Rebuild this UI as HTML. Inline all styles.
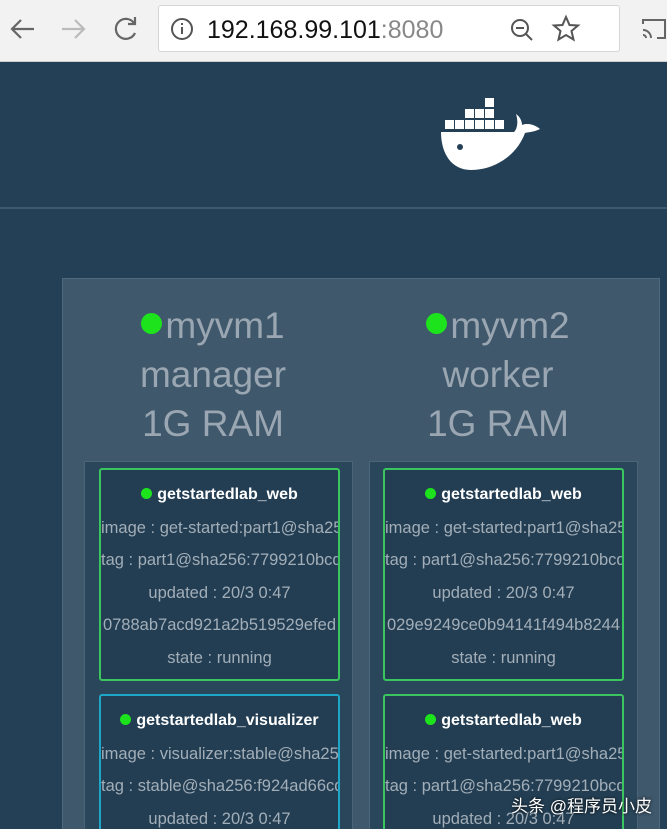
<!DOCTYPE html>
<html><head><meta charset="utf-8"><style>
*{margin:0;padding:0;box-sizing:border-box}
html,body{width:667px;height:829px;overflow:hidden}
body{background:#244057;font-family:"Liberation Sans","Noto Sans CJK SC",sans-serif;position:relative}
.bar{position:absolute;left:0;top:0;width:667px;height:62px;background:#f2f2f2;border-bottom:1px solid #ccc}
.url{position:absolute;left:158px;top:5px;width:462px;height:47px;background:#fff;border:1px solid #d6d6d6;border-radius:3px}
.url span{position:absolute;left:48px;top:10px;font-size:25px;color:#111}
.hr{position:absolute;left:0;top:207px;width:667px;height:2px;background:#3b5a70}
.panel{position:absolute;left:62px;top:278px;width:598px;height:560px;background:#3f586c;border:1px solid #4f687c}
.node{position:absolute;top:301px;width:268px;text-align:center;color:#9aa6b1;font-size:37px;line-height:49px}
.dot{display:inline-block;width:21px;height:21px;border-radius:50%;background:#1de31d;margin-right:3px;vertical-align:4px}
.col{position:absolute;top:461px;width:269px;height:380px;background:#2a465b;border:1px solid #4c6477}
.card{position:absolute;width:241px;background:#233e53;border:2px solid #3bc55f;border-radius:3px;overflow:hidden;text-align:center;white-space:nowrap;padding-top:9px}
.card.b{border-color:#1ea6c9}
.card div{height:32.6px;line-height:32px;font-size:16.5px;color:#a2aeb8}
.card .t{color:#fff;font-weight:bold;font-size:16px}
.card .t i{display:inline-block;width:11px;height:11px;border-radius:50%;background:#1de31d;margin-right:5px}
.wm{position:absolute;left:511px;top:792px;color:#fff;font-size:17px;text-shadow:0 0 3px #000}
</style></head><body>
<div class="bar">
<svg width="150" height="60" style="position:absolute;left:0;top:0" fill="none" stroke-width="2.2">
<path d="M34 29H12M21 20l-9 9 9 9" stroke="#666"/>
<path d="M62 29h22M75 20l9 9-9 9" stroke="#bbb"/>
<path d="M134 23a10 10 0 1 0 1 10M135 17v7h-7" stroke="#666"/>
</svg>
<div class="url">
<svg width="30" height="30" style="position:absolute;left:9px;top:9px"><circle cx="14" cy="14" r="10" stroke="#555" stroke-width="2" fill="none"/><path d="M14 12v7M14 8v2" stroke="#555" stroke-width="2"/></svg>
<span>192.168.99.101<span style="position:static;color:#888">:8080</span></span>
<svg width="80" height="40" style="position:absolute;left:345px;top:5px" fill="none" stroke="#555" stroke-width="2"><circle cx="16" cy="17" r="8"/><path d="M22 23l6 6M12 17h8"/><path d="M62 6l3.5 8 8.5.5-6.5 5.5 2 8.5-7.5-4.5-7.5 4.5 2-8.5-6.5-5.5 8.5-.5z"/></svg>
</div>
<svg width="30" height="30" style="position:absolute;left:640px;top:16px" fill="none" stroke="#666" stroke-width="2"><path d="M3 8V4h22v18h-8M3 14a8 8 0 0 1 8 8M3 19a3 3 0 0 1 3 3"/></svg>
</div>
<svg width="110" height="80" style="position:absolute;left:438px;top:95px" fill="#fff">
<rect x="47" y="3" width="9" height="9"/>
<rect x="27" y="14" width="9" height="9"/><rect x="37" y="14" width="9" height="9"/><rect x="47" y="14" width="9" height="9"/>
<rect x="7" y="25" width="9" height="9"/><rect x="17" y="25" width="9" height="9"/><rect x="27" y="25" width="9" height="9"/><rect x="37" y="25" width="9" height="9"/><rect x="47" y="25" width="9" height="9"/><rect x="57" y="25" width="9" height="9"/>
<path d="M3 37h73c4-4 4-12 2-18 3 2 6 6 6 11 5-2 12-1 18 4-6 3-11 3-15 4-8 22-30 37-54 37C13 75 3 58 3 37z"/>
<circle cx="22" cy="52" r="3" fill="#244057"/>
</svg>
<div class="hr"></div>
<div class="panel"></div>
<div class="node" style="left:79px"><span class="dot"></span>myvm1<br>manager<br>1G RAM</div>
<div class="node" style="left:364px"><span class="dot"></span>myvm2<br>worker<br>1G RAM</div>
<div class="col" style="left:84px"></div>
<div class="col" style="left:369px"></div>
<div class="card" style="left:99px;top:468px;height:213px">
<div class="t"><i></i>getstartedlab_web</div><div>image : get-started:part1@sha256</div><div>tag : part1@sha256:7799210bcd</div><div>updated : 20/3 0:47</div><div>0788ab7acd921a2b519529efed</div><div>state : running</div></div>
<div class="card b" style="left:99px;top:694px;height:150px">
<div class="t"><i></i>getstartedlab_visualizer</div><div>image : visualizer:stable@sha256</div><div>tag : stable@sha256:f924ad66cd</div><div>updated : 20/3 0:47</div></div>
<div class="card" style="left:383px;top:468px;height:213px">
<div class="t"><i></i>getstartedlab_web</div><div>image : get-started:part1@sha256</div><div>tag : part1@sha256:7799210bcd</div><div>updated : 20/3 0:47</div><div>029e9249ce0b94141f494b8244</div><div>state : running</div></div>
<div class="card" style="left:383px;top:694px;height:150px">
<div class="t"><i></i>getstartedlab_web</div><div>image : get-started:part1@sha256</div><div>tag : part1@sha256:7799210bcd</div><div>updated : 20/3 0:47</div></div>
<div class="wm">头条 @程序员小皮</div>
</body></html>
